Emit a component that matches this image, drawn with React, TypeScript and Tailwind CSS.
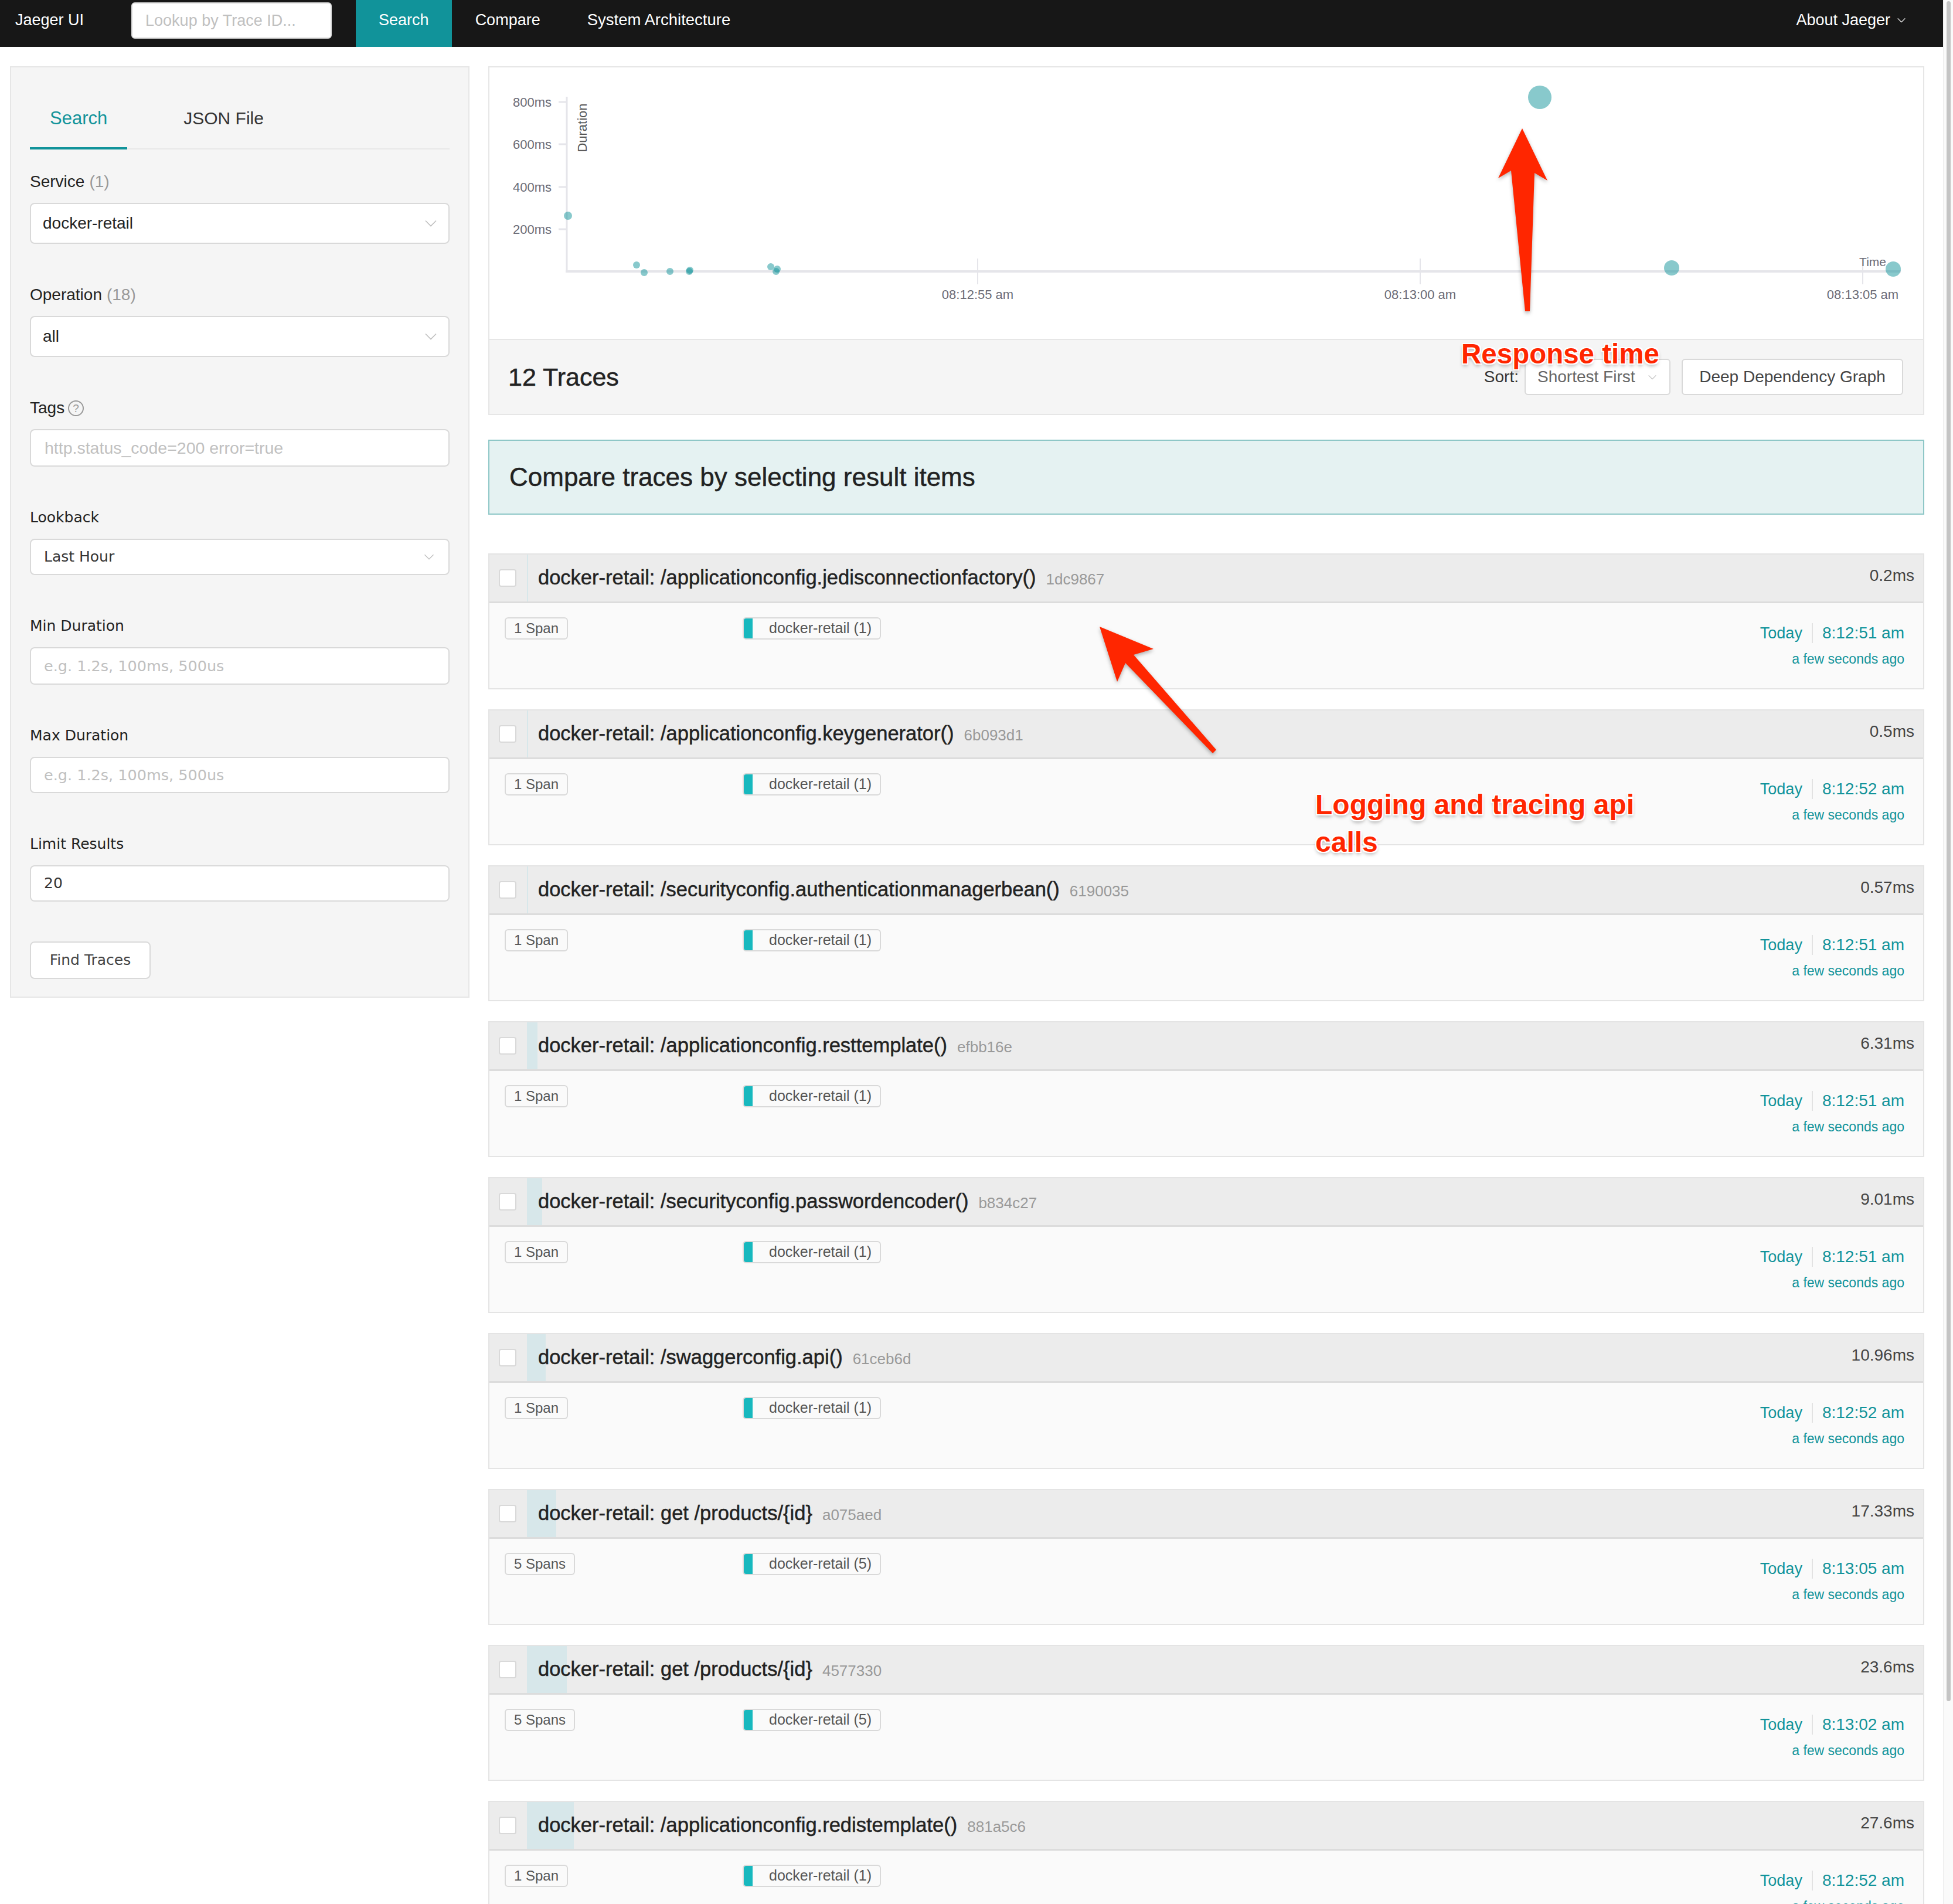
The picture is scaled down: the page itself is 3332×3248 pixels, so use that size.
import React from "react";

// ----------------------------------------------------------------------
// DATA
// ----------------------------------------------------------------------
type Trace = {
  name: string;
  id: string;
  dur: string;
  ms: number;
  spans: string;
  svc: string;
  time: string;
};

const traces: Trace[] = [
  { name: "docker-retail: /applicationconfig.jedisconnectionfactory()", id: "1dc9867", dur: "0.2ms", ms: 0.2, spans: "1 Span", svc: "docker-retail (1)", time: "8:12:51 am" },
  { name: "docker-retail: /applicationconfig.keygenerator()", id: "6b093d1", dur: "0.5ms", ms: 0.5, spans: "1 Span", svc: "docker-retail (1)", time: "8:12:52 am" },
  { name: "docker-retail: /securityconfig.authenticationmanagerbean()", id: "6190035", dur: "0.57ms", ms: 0.57, spans: "1 Span", svc: "docker-retail (1)", time: "8:12:51 am" },
  { name: "docker-retail: /applicationconfig.resttemplate()", id: "efbb16e", dur: "6.31ms", ms: 6.31, spans: "1 Span", svc: "docker-retail (1)", time: "8:12:51 am" },
  { name: "docker-retail: /securityconfig.passwordencoder()", id: "b834c27", dur: "9.01ms", ms: 9.01, spans: "1 Span", svc: "docker-retail (1)", time: "8:12:51 am" },
  { name: "docker-retail: /swaggerconfig.api()", id: "61ceb6d", dur: "10.96ms", ms: 10.96, spans: "1 Span", svc: "docker-retail (1)", time: "8:12:52 am" },
  { name: "docker-retail: get /products/{id}", id: "a075aed", dur: "17.33ms", ms: 17.33, spans: "5 Spans", svc: "docker-retail (5)", time: "8:13:05 am" },
  { name: "docker-retail: get /products/{id}", id: "4577330", dur: "23.6ms", ms: 23.6, spans: "5 Spans", svc: "docker-retail (5)", time: "8:13:02 am" },
  { name: "docker-retail: /applicationconfig.redistemplate()", id: "881a5c6", dur: "27.6ms", ms: 27.6, spans: "1 Span", svc: "docker-retail (1)", time: "8:12:52 am" },
];

// puntos del scatter (coordenadas dentro del chart)
const dots = [
  { x: 134, y: 253, r: 7 },
  { x: 251, y: 337, r: 6 },
  { x: 264, y: 350, r: 6 },
  { x: 308, y: 348, r: 6 },
  { x: 341, y: 348, r: 6 },
  { x: 342, y: 346, r: 6 },
  { x: 480, y: 340, r: 6 },
  { x: 489, y: 348, r: 6 },
  { x: 491, y: 344, r: 6 },
  { x: 1792, y: 51, r: 20 },
  { x: 2017, y: 342, r: 13 },
  { x: 2395, y: 344, r: 13 },
];

const MAX_MS = 822;
const BAR_SPACE = 2380;

function Chevron({ className }: { className?: string }) {
  return (
    <svg viewBox="0 0 20 12" className={className} fill="none" stroke="currentColor" strokeWidth="1.6">
      <path d="M1 1.5l9 9 9-9" />
    </svg>
  );
}

// ----------------------------------------------------------------------
// SIDEBAR
// ----------------------------------------------------------------------
function Label({ children, alt }: { children: React.ReactNode; alt?: boolean }) {
  return (
    <div
      className={
        alt
          ? "h-[40px] flex items-center text-[25px] text-[#222] font-['DejaVu_Sans',sans-serif]"
          : "h-[40px] flex items-center text-[28px] text-[#222]"
      }
    >
      {children}
    </div>
  );
}

function Sidebar() {
  return (
    <div className="w-[784px] shrink-0 self-start bg-[#f5f5f5] border-2 border-[#e6e6e6] px-[32px] pt-[65px] pb-[30px]">
      {/* Tabs */}
      <div className="flex border-b-2 border-[#e8e8e8]">
        <div className="px-[34px] pb-[27px] border-b-4 border-[#11939a] -mb-[2px] text-[31px] leading-[44px] text-[#11939a]">
          Search
        </div>
        <div className="ml-[62px] px-[34px] pb-[27px] text-[30px] leading-[44px] text-[#333]">JSON File</div>
      </div>

      <div className="mt-[35px]">
        <Label>
          Service <span className="text-[#999] ml-[8px]">(1)</span>
        </Label>
        <div className="mt-[16px] h-[70px] bg-white border-2 border-[#d9d9d9] rounded-[8px] flex items-center justify-between pl-[20px] pr-[20px] text-[28px] text-[#222]">
          docker-retail
          <Chevron className="w-[20px] h-[12px] text-[#bfbfbf]" />
        </div>
      </div>

      <div className="mt-[67px]">
        <Label>
          Operation <span className="text-[#999] ml-[8px]">(18)</span>
        </Label>
        <div className="mt-[16px] h-[70px] bg-white border-2 border-[#d9d9d9] rounded-[8px] flex items-center justify-between pl-[20px] pr-[20px] text-[28px] text-[#222]">
          all
          <Chevron className="w-[20px] h-[12px] text-[#bfbfbf]" />
        </div>
      </div>

      <div className="mt-[67px]">
        <Label>
          Tags
          <span className="ml-[6px] w-[27px] h-[27px] rounded-full border-2 border-[#999] text-[#999] text-[19px] flex items-center justify-center leading-none">
            ?
          </span>
        </Label>
        <div className="mt-[16px] h-[64px] bg-white border-2 border-[#d9d9d9] rounded-[8px] flex items-center pl-[23px] text-[28.5px] text-[#c0c0c0]">
          http.status_code=200 error=true
        </div>
      </div>

      <div className="mt-[67px]">
        <Label alt>Lookback</Label>
        <div className="mt-[16px] h-[62px] bg-white border-2 border-[#d9d9d9] rounded-[8px] flex items-center justify-between pl-[22px] pr-[24px] text-[25px] text-[#333] font-['DejaVu_Sans',sans-serif]">
          Last Hour
          <Chevron className="w-[18px] h-[10px] text-[#bfbfbf]" />
        </div>
      </div>

      <div className="mt-[67px]">
        <Label alt>Min Duration</Label>
        <div className="mt-[16px] h-[64px] bg-white border-2 border-[#d9d9d9] rounded-[8px] flex items-center pl-[22px] text-[25.5px] text-[#c0c0c0] font-['DejaVu_Sans',sans-serif]">
          e.g. 1.2s, 100ms, 500us
        </div>
      </div>

      <div className="mt-[67px]">
        <Label alt>Max Duration</Label>
        <div className="mt-[16px] h-[62px] bg-white border-2 border-[#d9d9d9] rounded-[8px] flex items-center pl-[22px] text-[25.5px] text-[#c0c0c0] font-['DejaVu_Sans',sans-serif]">
          e.g. 1.2s, 100ms, 500us
        </div>
      </div>

      <div className="mt-[67px]">
        <Label alt>Limit Results</Label>
        <div className="mt-[16px] h-[62px] bg-white border-2 border-[#d9d9d9] rounded-[8px] flex items-center pl-[22px] text-[25px] text-[#333] font-['DejaVu_Sans',sans-serif]">
          20
        </div>
      </div>

      <div className="mt-[68px] w-[206px] h-[64px] bg-white border-2 border-[#d9d9d9] rounded-[8px] flex items-center justify-center text-[25px] text-[#444] font-['DejaVu_Sans',sans-serif]">
        Find Traces
      </div>
    </div>
  );
}

// ----------------------------------------------------------------------
// SCATTER PLOT
// ----------------------------------------------------------------------
function ScatterPlot() {
  const yLabels = [
    { t: "800ms", y: 59 },
    { t: "600ms", y: 131 },
    { t: "400ms", y: 204 },
    { t: "200ms", y: 276 },
  ];
  const xTicks = [
    { t: "08:12:55 am", x: 833 },
    { t: "08:13:00 am", x: 1588 },
    { t: "08:13:05 am", x: 2343 },
  ];
  return (
    <svg width="2446" height="463" viewBox="0 0 2446 463" className="block">
      {/* ejes */}
      <line x1="132" y1="50" x2="132" y2="350" stroke="#e5e5ea" strokeWidth="3" />
      <line x1="130" y1="348" x2="2408" y2="348" stroke="#e5e5ea" strokeWidth="4" />
      {yLabels.map((l) => (
        <g key={l.t}>
          <line x1="118" y1={l.y} x2="132" y2={l.y} stroke="#e5e5ea" strokeWidth="3" />
          <text x="106" y={l.y + 8} textAnchor="end" fontSize="22" fill="#6b6b76" fontFamily="Liberation Sans, Arial, sans-serif">
            {l.t}
          </text>
        </g>
      ))}
      {xTicks.map((t) => (
        <g key={t.t}>
          <line x1={t.x} y1="326" x2={t.x} y2="370" stroke="#e5e5ea" strokeWidth="2" />
          <text x={t.x} y="395" textAnchor="middle" fontSize="22" fill="#6b6b76" fontFamily="Liberation Sans, Arial, sans-serif">
            {t.t}
          </text>
        </g>
      ))}
      <text
        x="0"
        y="0"
        transform="translate(166 103) rotate(-90)"
        textAnchor="middle"
        fontSize="22"
        fill="#555"
        fontFamily="Liberation Sans, Arial, sans-serif"
      >
        Duration
      </text>
      <text x="2383" y="339" textAnchor="end" fontSize="21" fill="#6b6b76" fontFamily="Liberation Sans, Arial, sans-serif">
        Time
      </text>
      {dots.map((d, i) => (
        <circle key={i} cx={d.x} cy={d.y} r={d.r} fill="#11939a" fillOpacity="0.5" />
      ))}
    </svg>
  );
}

// ----------------------------------------------------------------------
// RESULT ITEM
// ----------------------------------------------------------------------
function TraceItem({ t }: { t: Trace }) {
  const barW = Math.max(2, (t.ms / MAX_MS) * BAR_SPACE);
  return (
    <div className="border-2 border-[#e4e4e4]">
      <div className="h-[83px] bg-[#ececec] border-b-[3px] border-[#dcdcdc] flex items-stretch">
        <div className="w-[64px] shrink-0 flex items-center pl-[16px]">
          <div className="w-[30px] h-[30px] bg-white border-2 border-[#d9d9d9] rounded-[4px]" />
        </div>
        <div className="relative flex-1 flex items-center justify-between pl-[19px] pr-[15px]">
          <div className="absolute left-0 top-0 bottom-0 bg-[#d7e7ea]" style={{ width: barW }} />
          <div className="relative flex items-baseline">
            <span className="text-[34.5px] text-[#222] [-webkit-text-stroke:0.5px_#222]">{t.name}</span>
            <span className="ml-[17px] text-[26px] text-[#999]">{t.id}</span>
          </div>
          <span className="relative text-[28px] text-[#444] -mt-[8px]">{t.dur}</span>
        </div>
      </div>
      <div className="h-[145px] bg-[#fafafa] flex justify-between px-[26px]">
        <div className="flex items-start mt-[24px]">
          <div className="w-[406px]">
            <span className="inline-flex items-center h-[38px] px-[14px] bg-[#fafafa] border-2 border-[#d9d9d9] rounded-[6px] text-[24px] text-[#555]">
              {t.spans}
            </span>
          </div>
          <span className="inline-flex items-stretch h-[38px] bg-[#fafafa] border-2 border-[#d9d9d9] rounded-[6px] overflow-hidden">
            <span className="w-[15px] bg-[#17b8be]" />
            <span className="flex items-center pl-[28px] pr-[14px] text-[25px] text-[#555]">{t.svc}</span>
          </span>
        </div>
        <div className="mt-[31px] flex flex-col items-end pr-[6px] text-[#11939a]">
          <div className="h-[40px] flex items-center text-[28px]">
            <span className="text-[27px]">Today</span>
            <span className="mx-[16px] w-[2px] h-[34px] bg-[#e2e2e2]" />
            <span>{t.time}</span>
          </div>
          <div className="mt-[9px] h-[30px] flex items-center text-[23px]">a few seconds ago</div>
        </div>
      </div>
    </div>
  );
}

// ----------------------------------------------------------------------
// PAGE
// ----------------------------------------------------------------------
const redText =
  "absolute font-bold text-[#ff2600] [text-shadow:-2px_-2px_0_#fff,2px_-2px_0_#fff,-2px_2px_0_#fff,2px_2px_0_#fff,0_4px_6px_rgba(0,0,0,0.35)]";

export default function App() {
  return (
    <div className="relative w-[3332px] h-[3248px] overflow-hidden bg-white flex font-['Liberation_Sans',Arial,sans-serif]">
      <div className="w-[3315px] shrink-0 flex flex-col">
        {/* Top nav */}
        <div className="h-[80px] shrink-0 bg-[#171717] flex items-center pb-[12px] pl-[26px] pr-[64px] text-white text-[27px]">
          <span>Jaeger UI</span>
          <div className="ml-[81px] mt-[2px] w-[342px] h-[62px] bg-white rounded-[6px] border-2 border-[#d9d9d9] flex items-center pl-[22px] text-[#c0c0c0]">
            Lookup by Trace ID...
          </div>
          <div className="ml-[41px] self-stretch -mb-[12px] pb-[12px] px-[39px] bg-[#11939a] flex items-center">Search</div>
          <div className="px-[40px]">Compare</div>
          <div className="px-[40px] text-[27.5px]">System Architecture</div>
          <div className="ml-auto flex items-center gap-[12px]">
            About Jaeger
            <Chevron className="w-[14px] h-[9px] text-white" />
          </div>
        </div>

        {/* Content */}
        <div className="flex gap-[32px] pl-[17px] pt-[33px]">
          <Sidebar />

          <div className="w-[2450px] shrink-0 flex flex-col">
            {/* Chart + header */}
            <div className="border-2 border-[#e6e6e6]">
              <div className="h-[463px] bg-white">
                <ScatterPlot />
              </div>
              <div className="h-[128px] bg-[#f5f5f5] border-t-2 border-[#e6e6e6] flex items-center justify-between pl-[32px] pr-[34px]">
                <span className="text-[43px] text-[#222] [-webkit-text-stroke:0.5px_#222]">12 Traces</span>
                <div className="flex items-center">
                  <span className="text-[28px] text-[#333] mr-[10px]">Sort:</span>
                  <div className="w-[249px] h-[62px] bg-white border-2 border-[#d9d9d9] rounded-[6px] flex items-center justify-between pl-[20px] pr-[22px] text-[28px] text-[#666]">
                    Shortest First
                    <Chevron className="w-[14px] h-[9px] text-[#bfbfbf]" />
                  </div>
                  <div className="ml-[19px] w-[378px] h-[62px] bg-white border-2 border-[#d9d9d9] rounded-[6px] flex items-center justify-center text-[28px] text-[#444]">
                    Deep Dependency Graph
                  </div>
                </div>
              </div>
            </div>

            {/* Compare banner */}
            <div className="mt-[42px] h-[128px] bg-[#e5f2f2] border-2 border-[#8ec7c7] flex items-center pl-[34px] text-[44px] text-[#222] [-webkit-text-stroke:0.5px_#222]">
              Compare traces by selecting result items
            </div>

            {/* Results */}
            <div className="mt-[66px] flex flex-col gap-[34px]">
              {traces.map((t) => (
                <TraceItem key={t.id} t={t} />
              ))}
            </div>
          </div>
        </div>
      </div>

      {/* Scrollbar */}
      <div className="w-[17px] shrink-0 bg-[#fafafa] border-l border-[#ececec]">
        <div className="ml-[5px] mt-[2px] w-[7px] h-[2900px] rounded-full bg-[#c4c4c4]" />
      </div>

      {/* Annotations */}
      <svg
        className="absolute left-0 top-0 pointer-events-none [filter:drop-shadow(0_3px_3px_rgba(0,0,0,0.3))]"
        width="3332"
        height="3248"
      >
        <polygon fill="#ff2600" points="2597,219 2640,308 2618,295 2610,531 2602,531 2578,291 2556,304" />
        <polygon fill="#ff2600" points="1876,1069 1968,1107 1934,1117 2075,1279 2069,1285 1920,1131 1906,1163" />
      </svg>
      <div className={redText + " left-[2493px] top-[576px] text-[47.5px] leading-[56px]"}>Response time</div>
      <div className={redText + " left-[2244px] top-[1341px] text-[48px] leading-[64px]"}>
        Logging and tracing api
        <br />
        calls
      </div>
    </div>
  );
}
